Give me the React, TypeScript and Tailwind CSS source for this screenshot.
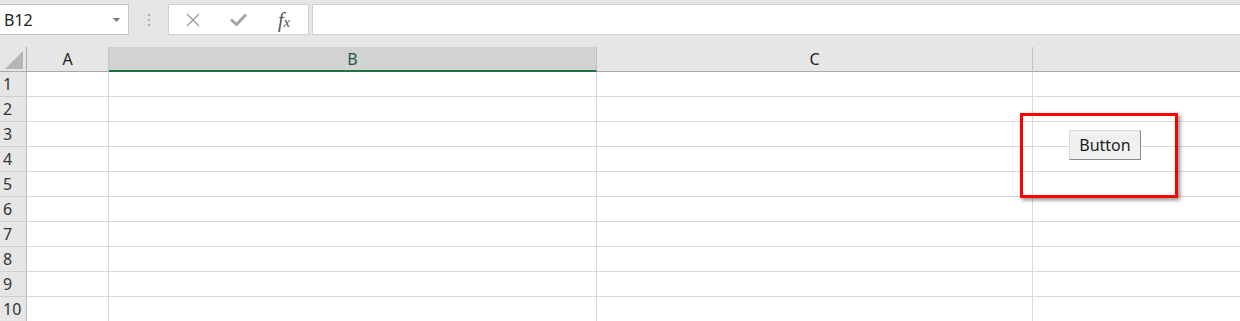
import React from "react";

const rows = [1, 2, 3, 4, 5, 6, 7, 8, 9, 10];

export default function App() {
  const font = { fontFamily: '"Noto Sans", "Open Sans", sans-serif' };
  return (
    <div className="w-[1240px] h-[321px] overflow-hidden bg-white relative" style={font}>
      {/* Formula bar */}
      <div className="h-[47px] bg-[#e6e6e6] flex items-start pt-[4px]">
        <div className="w-[129px] h-[31px] bg-white border border-[#c6c6c6] border-l-0 flex items-center justify-between pl-[4px] pr-[8px]">
          <span className="text-[16px] text-[#222] leading-none">B12</span>
          <svg width="7" height="4" viewBox="0 0 7 4"><path d="M0 0 L7 0 L3.5 4 Z" fill="#777" /></svg>
        </div>
        <div className="w-[39px] h-[31px] flex flex-col items-center justify-center gap-[3px]">
          <div className="w-[2px] h-[2px] bg-[#aaa]" />
          <div className="w-[2px] h-[2px] bg-[#aaa]" />
          <div className="w-[2px] h-[2px] bg-[#aaa]" />
        </div>
        <div className="w-[141px] h-[31px] bg-white border border-[#d0d0d0] flex items-center">
          <div className="w-[45px] flex justify-center ml-[1px]">
            <svg width="14" height="14" viewBox="0 0 14 14"><path d="M1 1 L13 13 M13 1 L1 13" stroke="#9a9a9a" strokeWidth="1.4" /></svg>
          </div>
          <div className="w-[46px] flex justify-center">
            <svg width="17" height="13" viewBox="0 0 17 13"><path d="M1 6.5 L6.5 11.5 L16 1.5" stroke="#a6a6a6" strokeWidth="3" fill="none" /></svg>
          </div>
          <div className="w-[46px] flex justify-center">
            <span className="text-[20px] italic text-[#555] leading-none" style={{ fontFamily: '"Liberation Serif", serif' }}>
              f<span className="text-[15px]">x</span>
            </span>
          </div>
        </div>
        <div className="ml-[3px] flex-1 h-[31px] bg-white border border-[#d0d0d0] border-r-0" />
      </div>

      {/* Grid */}
      <div className="grid grid-cols-[27px_82px_488px_436px_1fr]">
        {/* header */}
        <div className="h-[25px] bg-[#e6e6e6] border-r border-b border-[#a9a9a9] relative">
          <svg className="absolute left-[5px] top-[4px]" width="18" height="18" viewBox="0 0 18 18"><path d="M18 0 L18 18 L0 18 Z" fill="#b5b5b5" /></svg>
        </div>
        <div className="h-[25px] bg-[#e6e6e6] border-r border-r-[#c4c4c4] border-b border-b-[#a9a9a9] flex items-center justify-center text-[16px] text-[#222]">A</div>
        <div className="h-[25px] bg-[#d2d2d2] border-r border-r-[#bdbdbd] border-b-2 border-b-[#217346] flex items-center justify-center text-[16px] text-[#1e5a4a] pt-[1px]">B</div>
        <div className="h-[25px] bg-[#e6e6e6] border-r border-r-[#c4c4c4] border-b border-b-[#a9a9a9] flex items-center justify-center text-[16px] text-[#222]">C</div>
        <div className="h-[25px] bg-[#e6e6e6] border-b border-b-[#a9a9a9]" />
        {rows.map((r) => (
          <React.Fragment key={r}>
            <div className="h-[25px] bg-[#e6e6e6] border-r border-r-[#bcbcbc] border-b border-b-[#d0d0d0] flex items-center pl-[3px] text-[16px] text-[#333]">{r}</div>
            <div className="h-[25px] border-r border-b border-[#dadada]" />
            <div className="h-[25px] border-r border-b border-[#dadada]" />
            <div className="h-[25px] border-r border-b border-[#dadada]" />
            <div className="h-[25px] border-b border-[#dadada]" />
          </React.Fragment>
        ))}
      </div>

      {/* Overlay highlight */}
      <div className="absolute left-[1020px] top-[113px] w-[158px] h-[85px] border-[3px] border-[#ff0000] shadow-[2px_2px_4px_rgba(0,0,0,0.45)]" />
      <div className="absolute left-[1069px] top-[130px] w-[72px] h-[30px] bg-[#f0f0f0] border border-[#d9d9d9] border-r-[#8a8a8a] border-b-[#8a8a8a] flex items-center justify-center text-[16px] text-[#222]">
        Button
      </div>
    </div>
  );
}
